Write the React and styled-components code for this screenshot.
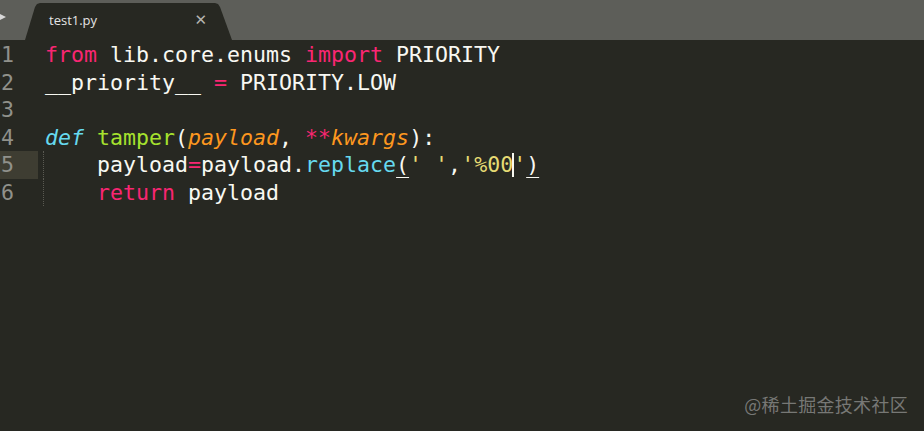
import React from 'react';
import styled, { createGlobalStyle } from 'styled-components';

const GlobalStyle = createGlobalStyle`
  html, body {
    margin: 0;
    padding: 0;
    background: #272822;
  }
  #root {
    width: 924px;
    height: 431px;
  }
`;

const Window = styled.div`
  position: relative;
  width: 924px;
  height: 431px;
  background: #272822;
  overflow: hidden;
  display: flex;
  flex-direction: column;
`;

const TabBar = styled.div`
  height: 40px;
  flex: none;
  background: #5d5e59;
  display: flex;
  align-items: flex-end;
  padding-left: 25px;
  position: relative;
`;

const ScrollArrow = styled.div`
  position: absolute;
  left: -4px;
  top: 12px;
  width: 0;
  height: 0;
  border-top: 5px solid transparent;
  border-bottom: 5px solid transparent;
  border-left: 10px solid #d8d8d8;
`;

const Tab = styled.div`
  width: 207px;
  height: 37px;
  background: #272822;
  clip-path: polygon(0 100%, 10px 4px, 12px 1px, 15px 0, 190px 0, 193px 1px, 195px 4px, 100% 100%);
  display: flex;
  align-items: center;
  justify-content: space-between;
  padding: 0 25px 3px 24px;
  box-sizing: border-box;
`;

const TabTitle = styled.span`
  font-family: "Open Sans", "Noto Sans", sans-serif;
  font-size: 13px;
  color: #e4e4e4;
`;

const Close = styled.span`
  font-family: "DejaVu Sans", sans-serif;
  font-size: 15px;
  color: #b4b4b0;
  line-height: 1;
`;

const Editor = styled.div`
  display: flex;
  flex: 1;
  padding-top: 1px;
  font-family: "DejaVu Sans Mono", monospace;
  font-size: 21.6px;
  line-height: 27.5px;
`;

const Gutter = styled.div`
  width: 45px;
  flex: none;
  display: flex;
  flex-direction: column;
`;

const LineNo = styled.div`
  width: 38px;
  height: 27.5px;
  padding-left: 1px;
  box-sizing: border-box;
  color: #90918b;
  background: ${p => (p.$active ? '#3e3d32' : 'transparent')};
`;

const Code = styled.div`
  display: flex;
  flex-direction: column;
  color: #f8f8f2;
  white-space: pre;
`;

const Line = styled.div`
  height: 27.5px;
  position: relative;
`;

const Guide = styled.span`
  position: absolute;
  left: -2px;
  top: 0;
  bottom: 0;
  border-left: 1px dotted #5a5a52;
`;

const Kw = styled.span`
  color: #f92672;
`;

const Storage = styled.span`
  color: #66d9ef;
  font-style: italic;
`;

const Fn = styled.span`
  color: #a6e22e;
`;

const Param = styled.span`
  color: #fd971f;
  font-style: italic;
`;

const Method = styled.span`
  color: #66d9ef;
`;

const Str = styled.span`
  color: #e6db74;
`;

const Match = styled.span`
  text-decoration: underline;
  text-underline-offset: 5px;
  text-decoration-thickness: 1px;
`;

const Caret = styled.span`
  display: inline-block;
  width: 2px;
  height: 24px;
  margin: 0 -1px;
  vertical-align: -5px;
  background: #f8f8f0;
`;

const Watermark = styled.div`
  position: absolute;
  right: 16px;
  bottom: 14px;
  font-family: "Noto Sans CJK SC", "Noto Sans", sans-serif;
  font-size: 18px;
  color: rgba(175, 175, 175, 0.6);
  letter-spacing: 0.3px;
`;

const lines = [1, 2, 3, 4, 5, 6];

export default function App() {
  return (
    <Window>
      <GlobalStyle />
      <TabBar>
        <ScrollArrow />
        <Tab>
          <TabTitle>test1.py</TabTitle>
          <Close>✕</Close>
        </Tab>
      </TabBar>
      <Editor>
        <Gutter>
          {lines.map(n => (
            <LineNo key={n} $active={n === 5}>{n}</LineNo>
          ))}
        </Gutter>
        <Code>
          <Line>
            <Kw>from</Kw> lib.core.enums <Kw>import</Kw> PRIORITY
          </Line>
          <Line>
            __priority__ <Kw>=</Kw> PRIORITY.LOW
          </Line>
          <Line> </Line>
          <Line>
            <Storage>def</Storage> <Fn>tamper</Fn>(<Param>payload</Param>, <Kw>**</Kw><Param>kwargs</Param>):
          </Line>
          <Line>
            <Guide />
            {'    '}payload<Kw>=</Kw>payload.<Method>replace</Method><Match>(</Match><Str>' '</Str>,<Str>'%00</Str><Caret /><Str>'</Str><Match>)</Match>
          </Line>
          <Line>
            <Guide />
            {'    '}<Kw>return</Kw> payload
          </Line>
        </Code>
      </Editor>
      <Watermark>@稀土掘金技术社区</Watermark>
    </Window>
  );
}
